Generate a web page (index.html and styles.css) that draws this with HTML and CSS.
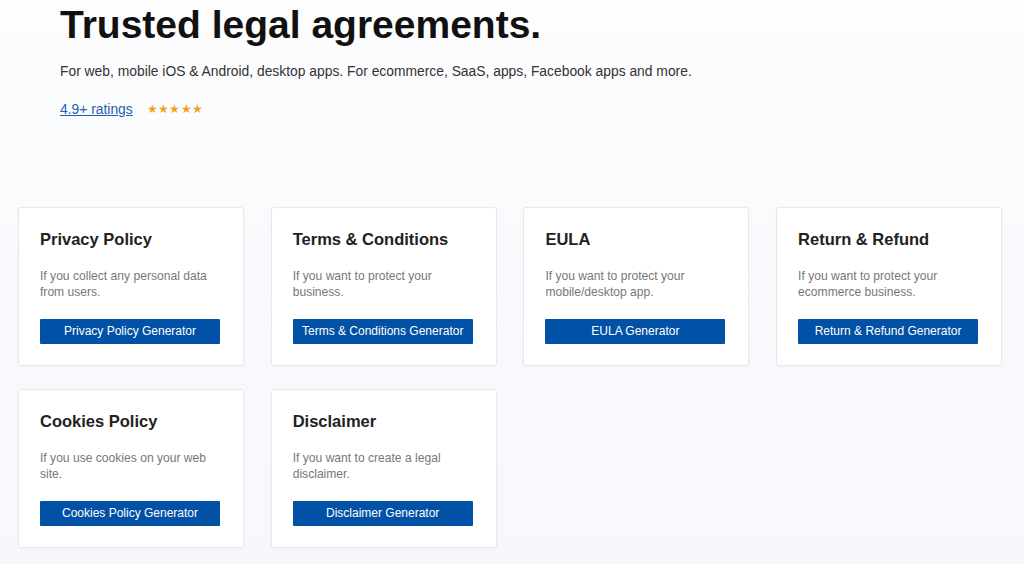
FILE: index.html
```html
<!DOCTYPE html>
<html>
<head>
    <title>Trusted legal agreements</title>
    <link rel="stylesheet" href="styles.css">
</head>
<body>
    <div class="hero">
        <h1>Trusted legal agreements.</h1>
        <p class="lead">For web, mobile iOS &amp; Android, desktop apps. For ecommerce, SaaS, apps, Facebook apps and more.</p>
        <div class="rating">
            <a href="#">4.9+ ratings</a>
            <span class="stars">★★★★★</span>
        </div>
    </div>

    <div class="cards">
        <div class="card">
            <h2>Privacy Policy</h2>
            <p>If you collect any personal data from users.</p>
            <a class="btn" href="#">Privacy Policy Generator</a>
        </div>
        <div class="card">
            <h2>Terms &amp; Conditions</h2>
            <p>If you want to protect your business.</p>
            <a class="btn" href="#">Terms &amp; Conditions Generator</a>
        </div>
        <div class="card">
            <h2>EULA</h2>
            <p>If you want to protect your mobile/desktop app.</p>
            <a class="btn" href="#">EULA Generator</a>
        </div>
        <div class="card">
            <h2>Return &amp; Refund</h2>
            <p>If you want to protect your ecommerce business.</p>
            <a class="btn" href="#">Return &amp; Refund Generator</a>
        </div>
        <div class="card">
            <h2>Cookies Policy</h2>
            <p>If you use cookies on your web site.</p>
            <a class="btn" href="#">Cookies Policy Generator</a>
        </div>
        <div class="card">
            <h2>Disclaimer</h2>
            <p>If you want to create a legal disclaimer.</p>
            <a class="btn" href="#">Disclaimer Generator</a>
        </div>
    </div>
</body>
</html>
```

FILE: styles.css
```css
body {
    font-family: 'Liberation Sans', Arial, sans-serif;
    background: linear-gradient(#fdfdfe, #f7f9fc 60%, #f6f8fb);
    color: #333;
    margin: 0;
    height: 564px;
    overflow: hidden;
}

.hero {
    padding: 1px 0 0 60px;
}

h1 {
    font-size: 39px;
    line-height: 48px;
    margin: 0 0 12px 0;
    color: #111;
}

.lead {
    font-size: 13.85px;
    line-height: 20px;
    margin: 0 0 18px 0;
    color: #333;
}

.rating {
    display: flex;
    align-items: center;
    gap: 14px;
    font-size: 13.85px;
    line-height: 20px;
}

.rating a {
    color: #1f5fae;
}

.stars {
    color: #f0a020;
    font-size: 11.5px;
    letter-spacing: 0.3px;
}

.cards {
    display: grid;
    grid-template-columns: repeat(4, 226px);
    column-gap: 26.7px;
    row-gap: 23px;
    padding: 88px 0 0 18px;
}

.card {
    background-color: #fff;
    border: 1px solid #e5e8ec;
    border-radius: 3px;
    box-shadow: 0 1px 3px rgba(0, 0, 0, 0.04);
    padding: 20px 22px 22px 21px;
    height: 115px;
}

.card h2 {
    font-size: 16.5px;
    line-height: 22px;
    margin: 0 0 18px 0;
    color: #222;
}

.card p {
    font-size: 12.1px;
    line-height: 16px;
    margin: 0 0 19px 0;
    color: #777;
}

.btn {
    display: block;
    width: 180px;
    height: 25px;
    line-height: 25px;
    background-color: #0151a6;
    color: #fff;
    text-align: center;
    text-decoration: none;
    font-size: 12px;
    border-radius: 1px;
}
```
